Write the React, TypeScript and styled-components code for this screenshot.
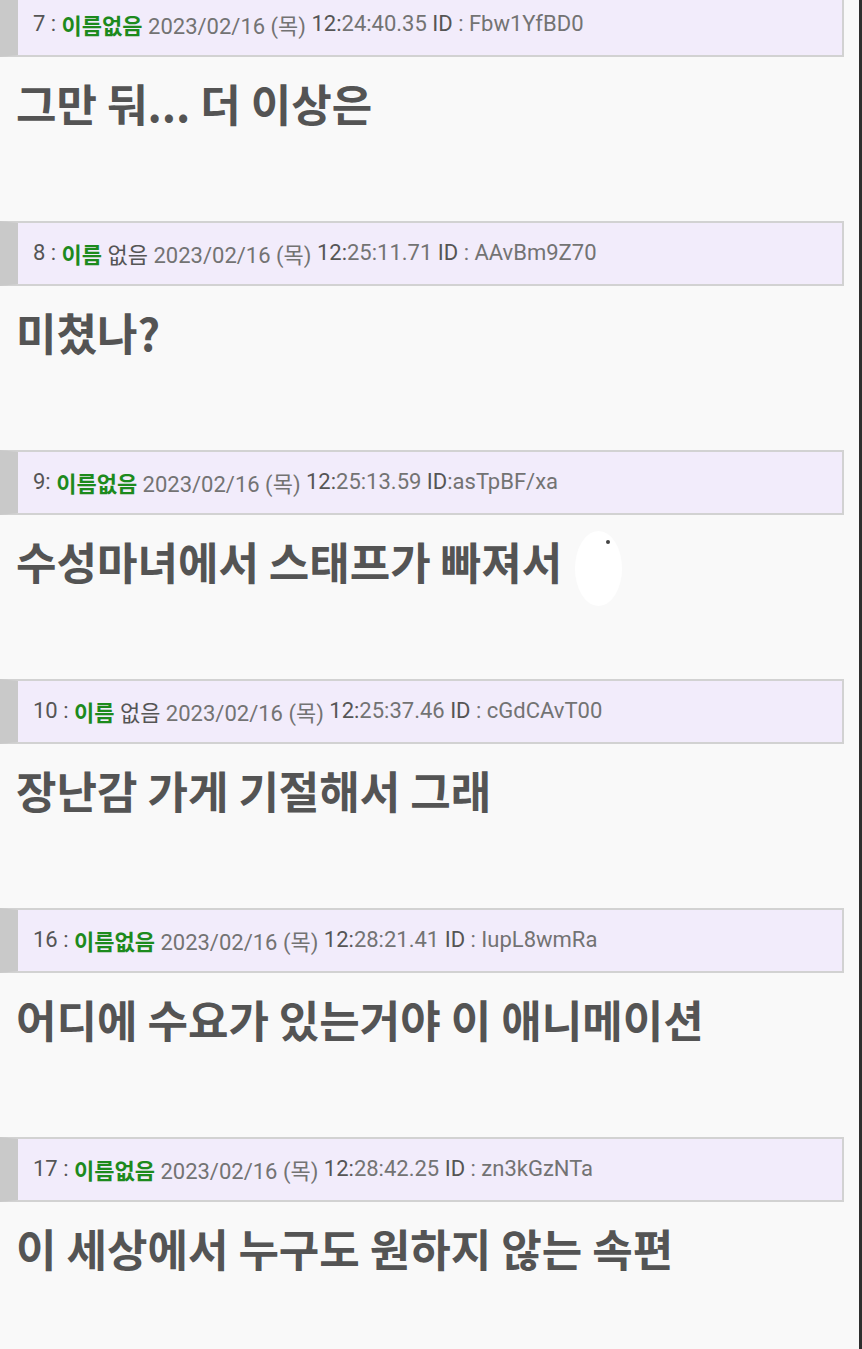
import styled, { createGlobalStyle } from 'styled-components';

const GlobalStyle = createGlobalStyle`
  html, body {
    margin: 0;
    padding: 0;
    background: #f9f9f9;
  }
`;

type Part = { text: string; tone?: 'name' | 'dark' | 'light' };

type Post = {
  head: Part[];
  body: string;
  blot?: boolean;
};

const posts: Post[] = [
  {
    head: [
      { text: '7 : ', tone: 'dark' },
      { text: '이름없음', tone: 'name' },
      { text: ' 2023/02/16 (목) ', tone: 'light' },
      { text: '12:', tone: 'dark' },
      { text: '24:40.35 ', tone: 'light' },
      { text: 'ID', tone: 'dark' },
      { text: ' : Fbw1YfBD0', tone: 'light' }
    ],
    body: '그만 둬... 더 이상은'
  },
  {
    head: [
      { text: '8 : ', tone: 'dark' },
      { text: '이름', tone: 'name' },
      { text: ' 없음', tone: 'dark' },
      { text: ' 2023/02/16 (목) ', tone: 'light' },
      { text: '12:', tone: 'dark' },
      { text: '25:11.71 ', tone: 'light' },
      { text: 'ID', tone: 'dark' },
      { text: ' : AAvBm9Z70', tone: 'light' }
    ],
    body: '미쳤나?'
  },
  {
    head: [
      { text: '9: ', tone: 'dark' },
      { text: '이름없음', tone: 'name' },
      { text: ' 2023/02/16 (목) ', tone: 'light' },
      { text: '12:', tone: 'dark' },
      { text: '25:13.59 ', tone: 'light' },
      { text: 'ID', tone: 'dark' },
      { text: ':asTpBF/xa', tone: 'light' }
    ],
    body: '수성마녀에서 스태프가 빠져서',
    blot: true
  },
  {
    head: [
      { text: '10 : ', tone: 'dark' },
      { text: '이름', tone: 'name' },
      { text: ' 없음', tone: 'dark' },
      { text: ' 2023/02/16 (목) ', tone: 'light' },
      { text: '12:', tone: 'dark' },
      { text: '25:37.46 ', tone: 'light' },
      { text: 'ID', tone: 'dark' },
      { text: ' : cGdCAvT00', tone: 'light' }
    ],
    body: '장난감 가게 기절해서 그래'
  },
  {
    head: [
      { text: '16 : ', tone: 'dark' },
      { text: '이름없음', tone: 'name' },
      { text: ' 2023/02/16 (목) ', tone: 'light' },
      { text: '12:', tone: 'dark' },
      { text: '28:21.41 ', tone: 'light' },
      { text: 'ID', tone: 'dark' },
      { text: ' : IupL8wmRa', tone: 'light' }
    ],
    body: '어디에 수요가 있는거야 이 애니메이션'
  },
  {
    head: [
      { text: '17 : ', tone: 'dark' },
      { text: '이름없음', tone: 'name' },
      { text: ' 2023/02/16 (목) ', tone: 'light' },
      { text: '12:', tone: 'dark' },
      { text: '28:42.25 ', tone: 'light' },
      { text: 'ID', tone: 'dark' },
      { text: ' : zn3kGzNTa', tone: 'light' }
    ],
    body: '이 세상에서 누구도 원하지 않는 속편'
  }
];

export default function App(): JSX.Element {
  return (
    <>
      <GlobalStyle />
      <Page>
        <Thread>
          {posts.map((post, i) => (
            <PostItem key={i}>
              <Header>
                {post.head.map((part, j) => (
                  <HeadText key={j} $tone={part.tone}>
                    {part.text}
                  </HeadText>
                ))}
              </Header>
              <Body>
                {post.body}
                {post.blot && (
                  <Blot>
                    <BlotDot />
                  </Blot>
                )}
              </Body>
            </PostItem>
          ))}
        </Thread>
      </Page>
    </>
  );
}

const Page = styled.div`
  width: 862px;
  height: 1349px;
  overflow: hidden;
  box-sizing: border-box;
  background: #f9f9f9;
  border-right: 3px solid #2e2e2e;
  padding-right: 15px;
`;

const Thread = styled.div`
  display: flex;
  flex-direction: column;
  margin-top: -8px;
`;

const PostItem = styled.div`
  display: flex;
  flex-direction: column;
`;

const Header = styled.div`
  height: 65px;
  box-sizing: border-box;
  display: flex;
  align-items: center;
  padding: 0 0 2px 15px;
  background: #f2ecfb;
  border: 2px solid #d2d2d2;
  border-left: 18px solid #c9c9c9;
  font-family: Roboto, 'Noto Sans CJK KR', sans-serif;
  font-size: 22px;
  white-space: pre;
`;

const HeadText = styled.span<{ $tone?: 'name' | 'dark' | 'light' }>`
  color: ${(p) => (p.$tone === 'name' ? '#1d8a1d' : p.$tone === 'dark' ? '#555555' : '#737373')};
  font-weight: ${(p) => (p.$tone === 'name' ? 700 : 400)};
`;

const Body = styled.div`
  height: 164px;
  box-sizing: border-box;
  padding: 20px 0 0 16px;
  display: flex;
  align-items: flex-start;
  font-family: 'Noto Sans CJK KR', Roboto, sans-serif;
  font-size: 44px;
  font-weight: 700;
  line-height: 52px;
  color: #545454;
  white-space: pre;
`;

const Blot = styled.span`
  position: relative;
  width: 47px;
  height: 75px;
  margin: -4px 0 0 13px;
  border-radius: 50%;
  background: #ffffff;
`;

const BlotDot = styled.span`
  position: absolute;
  top: 9px;
  left: 31px;
  width: 4px;
  height: 4px;
  border-radius: 50%;
  background: #444;
`;
